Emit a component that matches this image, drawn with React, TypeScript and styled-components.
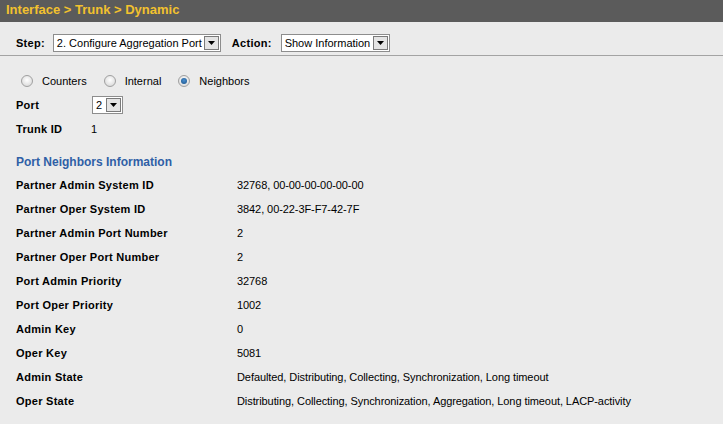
import styled, { createGlobalStyle } from 'styled-components';

const GlobalStyle = createGlobalStyle`
  html, body {
    margin: 0;
    padding: 0;
    background: #ebebeb;
  }
  body {
    font-family: 'Liberation Sans', Arial, sans-serif;
    font-size: 11px;
    color: #000000;
  }
`;

const Page = styled.div`
  width: 723px;
  height: 424px;
  background: #ebebeb;
  overflow: hidden;
`;

const TitleBar = styled.div`
  height: 22px;
  background: #5b5b5b;
  color: #f2c12e;
  font-weight: 700;
  font-size: 13px;
  line-height: 20px;
  padding-left: 6px;
`;

const Toolbar = styled.div`
  display: flex;
  align-items: flex-end;
  height: 34px;
  box-sizing: border-box;
  padding: 0 0 3px 16px;
  border-bottom: 1px solid #a3a3a3;
`;

const ToolLabel = styled.span<{ $left?: number; $right: number }>`
  font-weight: 700;
  letter-spacing: 0.27px;
  line-height: 18px;
  margin-left: ${(p) => p.$left || 0}px;
  margin-right: ${(p) => p.$right}px;
`;

const SelectBox = styled.div<{ $width: number }>`
  display: flex;
  align-items: center;
  justify-content: space-between;
  width: ${(p) => p.$width}px;
  height: 18px;
  box-sizing: border-box;
  border: 1px solid #8d8d8d;
  background: #ffffff;
  padding-left: 3px;
  font-size: 11px;
`;

const DropButton = styled.span`
  display: flex;
  align-items: center;
  justify-content: center;
  width: 15px;
  height: 14px;
  margin-right: 1px;
  box-sizing: border-box;
  border: 1px solid #7a7a7a;
  background: #e4e4e4;
`;

const Content = styled.div`
  padding: 15px 0 0 16px;
`;

const RadioRow = styled.div`
  display: flex;
  align-items: center;
  height: 20px;
  margin-left: 5px;
`;

const RadioItem = styled.label`
  display: flex;
  align-items: center;
  margin-right: 17px;
`;

const RadioCircle = styled.span<{ $on?: boolean }>`
  width: 12px;
  height: 12px;
  border-radius: 50%;
  box-sizing: border-box;
  border: 1px solid #a0a0a0;
  background: radial-gradient(circle at 50% 40%, #ffffff, #d2d2d2);
  margin-right: 9px;
  display: flex;
  align-items: center;
  justify-content: center;
  &::after {
    content: '';
    display: ${(p) => (p.$on ? 'block' : 'none')};
    width: 6px;
    height: 6px;
    border-radius: 50%;
    background: radial-gradient(circle at 50% 40%, #4a8fcf, #174f86);
  }
`;

const FieldRow = styled.div<{ $height: number; $top?: number }>`
  display: flex;
  align-items: center;
  height: ${(p) => p.$height}px;
  margin-top: ${(p) => p.$top || 0}px;
`;

const FieldLabel = styled.span<{ $width: number }>`
  width: ${(p) => p.$width}px;
  font-weight: 700;
  letter-spacing: 0.27px;
  flex-shrink: 0;
`;

const SectionTitle = styled.div`
  color: #2f5fa6;
  font-weight: 700;
  font-size: 12px;
  margin-top: 11px;
  height: 21px;
  line-height: 20px;
`;

const InfoRow = styled.div`
  display: flex;
  align-items: center;
  height: 24px;
`;

const InfoLabel = styled.span`
  width: 221px;
  font-weight: 700;
  letter-spacing: 0.27px;
  flex-shrink: 0;
`;

const InfoValue = styled.span`
  white-space: nowrap;
  letter-spacing: -0.08px;
`;

const Arrow = () => (
  <svg width="7" height="4" viewBox="0 0 7 4">
    <polygon points="0,0 7,0 3.5,4" fill="#000" />
  </svg>
);

const Select = ({ width, value }: { width: number; value: string }) => (
  <SelectBox $width={width}>
    <span>{value}</span>
    <DropButton>
      <Arrow />
    </DropButton>
  </SelectBox>
);

const rows: [string, string][] = [
  ['Partner Admin System ID', '32768, 00-00-00-00-00-00'],
  ['Partner Oper System ID', '3842, 00-22-3F-F7-42-7F'],
  ['Partner Admin Port Number', '2'],
  ['Partner Oper Port Number', '2'],
  ['Port Admin Priority', '32768'],
  ['Port Oper Priority', '1002'],
  ['Admin Key', '0'],
  ['Oper Key', '5081'],
  ['Admin State', 'Defaulted, Distributing, Collecting, Synchronization, Long timeout'],
  ['Oper State', 'Distributing, Collecting, Synchronization, Aggregation, Long timeout, LACP-activity'],
];

export default function App() {
  return (
    <Page>
      <GlobalStyle />
      <TitleBar>Interface &gt; Trunk &gt; Dynamic</TitleBar>
      <Toolbar>
        <ToolLabel $right={8}>Step:</ToolLabel>
        <Select width={168} value="2. Configure Aggregation Port" />
        <ToolLabel $left={11} $right={9}>Action:</ToolLabel>
        <Select width={109} value="Show Information" />
      </Toolbar>
      <Content>
        <RadioRow>
          <RadioItem>
            <RadioCircle />
            Counters
          </RadioItem>
          <RadioItem>
            <RadioCircle />
            Internal
          </RadioItem>
          <RadioItem>
            <RadioCircle $on />
            Neighbors
          </RadioItem>
        </RadioRow>
        <FieldRow $height={24} $top={2}>
          <FieldLabel $width={76}>Port</FieldLabel>
          <Select width={31} value="2" />
        </FieldRow>
        <FieldRow $height={24}>
          <FieldLabel $width={75}>Trunk ID</FieldLabel>
          <span>1</span>
        </FieldRow>
        <SectionTitle>Port Neighbors Information</SectionTitle>
        {rows.map(([label, value]) => (
          <InfoRow key={label}>
            <InfoLabel>{label}</InfoLabel>
            <InfoValue>{value}</InfoValue>
          </InfoRow>
        ))}
      </Content>
    </Page>
  );
}
